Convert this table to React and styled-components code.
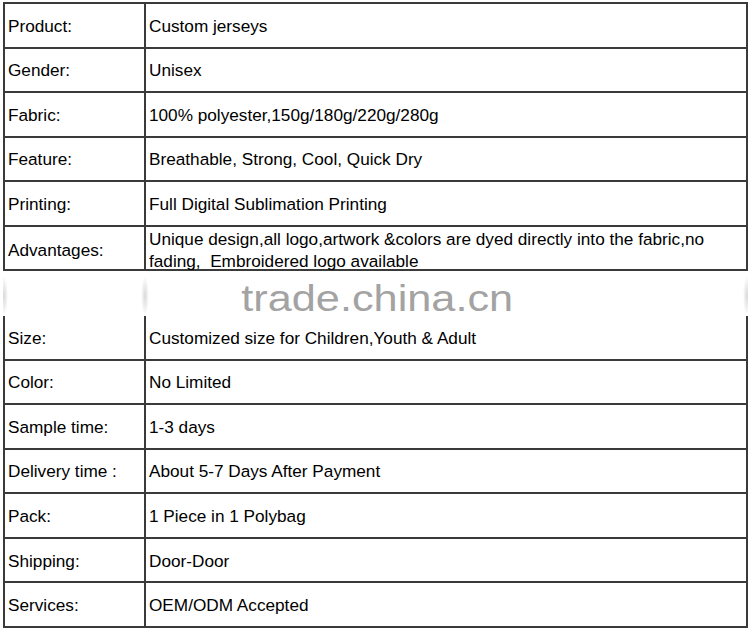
import React from 'react';
import styled, { createGlobalStyle } from 'styled-components';

const rows = [
  ['Product:', 'Custom jerseys'],
  ['Gender:', 'Unisex'],
  ['Fabric:', '100% polyester,150g/180g/220g/280g'],
  ['Feature:', 'Breathable, Strong, Cool, Quick Dry'],
  ['Printing:', 'Full Digital Sublimation Printing'],
  ['Advantages:', 'Unique design,all logo,artwork &colors are dyed directly into the fabric,no fading,\u00a0 Embroidered logo available'],
  null,
  ['Size:', 'Customized size for Children,Youth & Adult'],
  ['Color:', 'No Limited'],
  ['Sample time:', '1-3 days'],
  ['Delivery time :', 'About 5-7 Days After Payment'],
  ['Pack:', '1 Piece in 1 Polybag'],
  ['Shipping:', 'Door-Door'],
  ['Services:', 'OEM/ODM Accepted'],
];

const App = () => {
  return (
    <Page>
      <GlobalStyle />
      <Sheet>
        {rows.map((row, i) =>
          row ? (
            <Row key={i} first={i === 0}>
              <Label>{row[0]}</Label>
              <Value>{row[1]}</Value>
            </Row>
          ) : (
            <WatermarkRow key={i}>
              <WatermarkText>trade.china.cn</WatermarkText>
            </WatermarkRow>
          )
        )}
      </Sheet>
    </Page>
  );
};

const GlobalStyle = createGlobalStyle`
  html, body {
    margin: 0;
    padding: 0;
    background: #ffffff;
  }
  body {
    font-family: "Liberation Sans", Arial, sans-serif;
    color: #000000;
  }
`;

const Page = styled.div`
  width: 750px;
  height: 629px;
  padding: 2px 0 0 3px;
  box-sizing: border-box;
  background: #fff;
`;

const Sheet = styled.div`
  width: 745px;
  display: flex;
  flex-direction: column;
`;

const Row = styled.div`
  display: grid;
  grid-template-columns: 141px 1fr;
  height: ${props => (props.first ? '46.57px' : '44.57px')};
  box-sizing: border-box;
  border-left: 2px solid #3a3a3a;
  border-right: 2px solid #3a3a3a;
  border-top: ${props => (props.first ? '2px solid #3a3a3a' : 'none')};
  border-bottom: 2px solid #3a3a3a;
`;

const Label = styled.div`
  display: flex;
  align-items: center;
  padding: 1px 0 0 3px;
  border-right: 2px solid #3a3a3a;
  font-size: 17.2px;
  line-height: 22px;
`;

const Value = styled.div`
  display: flex;
  align-items: center;
  padding: 1px 12px 0 3px;
  font-size: 17.2px;
  line-height: 22px;
`;

const WatermarkRow = styled.div`
  height: 44.57px;
  display: flex;
  align-items: center;
  justify-content: center;
  background:
    radial-gradient(ellipse 4px 20px at 1px 55%, #d9d9d9, rgba(255, 255, 255, 0)),
    radial-gradient(ellipse 4px 20px at 142px 55%, #d9d9d9, rgba(255, 255, 255, 0)),
    radial-gradient(ellipse 4px 20px at 744px 55%, #d9d9d9, rgba(255, 255, 255, 0)),
    #ffffff;
`;

const WatermarkText = styled.span`
  font-family: "Liberation Sans", Arial, sans-serif;
  font-size: 37px;
  line-height: 40px;
  color: #a3a3a3;
  transform: scaleX(1.17);
  margin: 10px 0 0 4px;
`;

export default App;
